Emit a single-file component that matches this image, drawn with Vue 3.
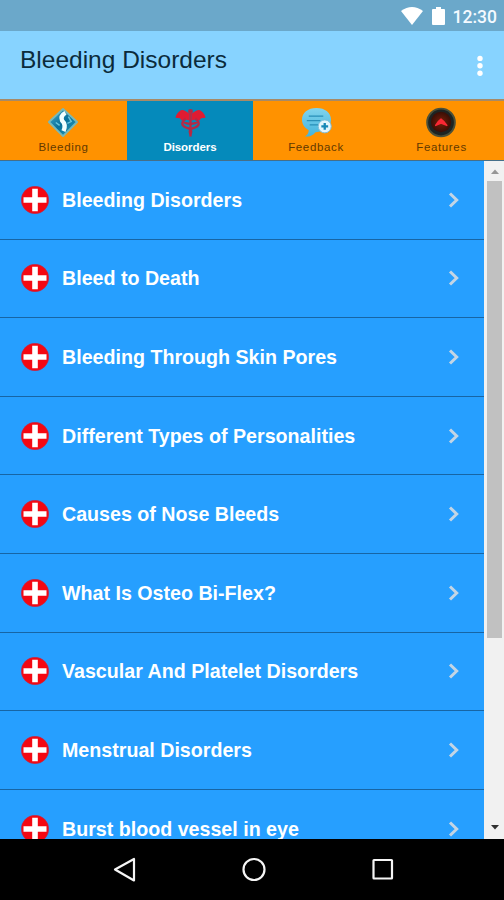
<template>
  <div class="screen">
    <div class="status-bar">
      <svg class="wifi" width="22" height="18" viewBox="0 0 22 18">
        <path d="M0 4Q11 -4 22 4L11 18Z" fill="#fff" />
      </svg>
      <svg class="battery" width="13" height="20" viewBox="0 0 13 20">
        <path d="M4 1h5v2h3q1 0 1 1v14q0 1-1 1H1q-1 0-1-1V4q0-1 1-1h3z" fill="#fff" />
      </svg>
      <span class="clock">12:30</span>
    </div>

    <header class="app-bar">
      <h1 class="title">Bleeding Disorders</h1>
      <svg class="more" width="6" height="22" viewBox="0 0 6 22" fill="#fff">
        <circle cx="3" cy="3.4" r="2.7" />
        <circle cx="3" cy="10.8" r="2.7" />
        <circle cx="3" cy="18.2" r="2.7" />
      </svg>
    </header>

    <nav class="tabs">
      <div
        v-for="tab in tabs"
        :key="tab.name"
        class="tab"
        :class="{ active: tab.name === activeTab }"
        @click="activeTab = tab.name"
      >
        <!-- Blue diamond sign -->
        <svg v-if="tab.icon === 'sign'" class="tab-icon" viewBox="0 0 32 32">
          <defs>
            <linearGradient id="sign" x1="0" y1="0" x2="1" y2="1">
              <stop offset="0" stop-color="#4aaed0" />
              <stop offset=".5" stop-color="#08719b" />
              <stop offset="1" stop-color="#2ba2bd" />
            </linearGradient>
          </defs>
          <path d="M15.500 2L30 15.500L15.500 30L1 15.500Z" fill="url(#sign)" stroke="#78b9b8" stroke-width="2" stroke-linejoin="round" />
          <path d="M18 6Q12.500 9 14.500 14Q19 18 16 25" fill="none" stroke="#f2ffff" stroke-width="4.500" />
          <path d="M8 16l4 3M21 10l3 5-4 2" fill="none" stroke="#69c5dc" stroke-width="1.500" />
        </svg>

        <!-- Caduceus -->
        <svg v-else-if="tab.icon === 'caduceus'" class="tab-icon" viewBox="0 0 32 32">
          <path d="M15 7Q8 1 5 4Q1 7 0.500 11L5 11.500L7 14L11 13L15 14Z" fill="#e01b32" />
          <path d="M17 7Q24 1 27 4Q31 7 31.500 11L27 11.500L25 14L21 13L17 14Z" fill="#e01b32" />
          <circle cx="16" cy="4.500" r="2.500" fill="#b52945" />
          <path d="M16 5V30.500" stroke="#c02640" stroke-width="2.400" />
          <path d="M11 12Q4 18 11 21Q19 23 16 28M21 12Q28 18 21 21Q13 23 16 28M8 15Q16 20 24 15" fill="none" stroke="#b52945" stroke-width="2.300" />
        </svg>

        <!-- Speech bubble with plus badge -->
        <svg v-else-if="tab.icon === 'bubble'" class="tab-icon" viewBox="0 0 32 32">
          <defs>
            <linearGradient id="bubble" x1="0" y1="0" x2="0" y2="1">
              <stop offset="0" stop-color="#82d4ed" />
              <stop offset="1" stop-color="#43b4dc" />
            </linearGradient>
          </defs>
          <path d="M16 1C7 1 1 6 1 13C1 18 4 22 8 24Q8 28 4 30.500Q11 31 15 26C24 26 31 21 31 13C31 6 25 1 16 1Z" fill="url(#bubble)" />
          <path d="M8 9.500H23M6 14H20M9 18.500H19" stroke="#298fb8" stroke-width="1.300" />
          <circle cx="24.500" cy="20" r="6.700" fill="#e4f5fc" stroke="#7dbdd8" />
          <path d="M24.500 16.500V23.500M21 20H28" stroke="#1787b6" stroke-width="2.400" />
        </svg>

        <!-- Dark round button with a red arrow -->
        <svg v-else class="tab-icon" viewBox="0 0 32 32">
          <defs>
            <radialGradient id="lens">
              <stop offset="0" stop-color="#782009" />
              <stop offset="1" stop-color="#3a0e05" />
            </radialGradient>
          </defs>
          <circle cx="15.500" cy="16" r="14.300" fill="#1d2423" stroke="#4b5039" stroke-width="2" />
          <circle cx="15.500" cy="15.500" r="10.500" fill="url(#lens)" />
          <path d="M10 19Q12 15 15.500 12.500Q19 15 21.500 19L15.500 16.500Z" fill="#fa2834" stroke="#fa2834" stroke-width="1.500" stroke-linejoin="round" />
        </svg>
        <span class="tab-label">{{ tab.name }}</span>
      </div>
    </nav>

    <main class="content">
      <ul class="list">
        <li v-for="item in items" :key="item" class="row">
          <svg class="cross" width="28" height="28" viewBox="0 0 28 28">
            <circle cx="14" cy="14" r="13.700" fill="#f40812" stroke="#b92c50" stroke-width=".6" />
            <path d="M14 2.800V25.200M2.500 14H25.500" stroke="#fff" stroke-width="5.600" />
          </svg>
          <span class="row-text">{{ item }}</span>
          <svg class="chevron" width="12" height="16" viewBox="0 0 12 16">
            <path d="M2 1.500L8.700 8L2 14.500" fill="none" stroke="#c3d5e5" stroke-width="3" />
          </svg>
        </li>
      </ul>
      <div class="scrollbar">
        <svg class="arrow" width="8" height="5" viewBox="0 0 8 5"><path d="M0 5L4 .5L8 5Z" fill="#969696" /></svg>
        <div class="thumb"></div>
        <svg class="arrow" width="8" height="5" viewBox="0 0 8 5"><path d="M0 0L4 4.500L8 0Z" fill="#303030" /></svg>
      </div>
    </main>

    <footer class="nav-bar">
      <svg width="24" height="28" viewBox="0 0 24 28">
        <path d="M21 3V24.500L2 13.500Z" />
      </svg>
      <svg width="26" height="28" viewBox="0 0 26 28">
        <circle cx="13" cy="13.500" r="10.500" />
      </svg>
      <svg width="24" height="28" viewBox="0 0 24 28">
        <rect x="2.500" y="4" width="18.500" height="18.500" rx=".5" />
      </svg>
    </footer>
  </div>
</template>

<script setup>
import { ref } from 'vue';

const activeTab = ref('Disorders');

const tabs = [
  { name: 'Bleeding', icon: 'sign' },
  { name: 'Disorders', icon: 'caduceus' },
  { name: 'Feedback', icon: 'bubble' },
  { name: 'Features', icon: 'button' }
];

const items = [
  'Bleeding Disorders',
  'Bleed to Death',
  'Bleeding Through Skin Pores',
  'Different Types of Personalities',
  'Causes of Nose Bleeds',
  'What Is Osteo Bi-Flex?',
  'Vascular And Platelet Disorders',
  'Menstrual Disorders',
  'Burst blood vessel in eye'
];
</script>

<style>
body {
  margin: 0;
}
</style>

<style scoped>
.screen {
  display: flex;
  flex-direction: column;
  width: 504px;
  height: 900px;
  overflow: hidden;
  background: #000;
  font-family: 'Liberation Sans', Arial, sans-serif;
}

.status-bar {
  box-sizing: border-box;
  display: flex;
  flex: none;
  align-items: center;
  justify-content: flex-end;
  height: 31px;
  padding-right: 7px;
  background: #6ba8ca;
}

.battery {
  margin-left: 9px;
}

.clock {
  margin-left: 8px;
  padding-top: 3px;
  color: #f4faff;
  font: 500 17.5px/20px Roboto, sans-serif;
}

.app-bar {
  box-sizing: border-box;
  display: flex;
  flex: none;
  justify-content: space-between;
  height: 68px;
  padding: 15px 21px 0 20px;
  background: #87d3ff;
}

.title {
  margin: 0;
  color: #0b2b3b;
  font-size: 24.5px;
  font-weight: 400;
  line-height: 28px;
}

.more {
  margin-top: 9px;
}

.tabs {
  box-sizing: border-box;
  display: grid;
  flex: none;
  grid-template-columns: 127px 126px 126px 125px;
  height: 62px;
  border-top: 2px solid #a78a67;
  border-bottom: 1px solid #456f8a;
}

.tab {
  display: flex;
  flex-direction: column;
  align-items: center;
  padding-top: 6px;
  background: #ff9200;
  color: #633900;
  cursor: pointer;
}

.tab.active {
  background: #058abb;
  color: #fff;
  font-weight: 700;
}

.tab-icon {
  width: 31px;
  height: 31px;
}

.tab-label {
  margin-top: 3px;
  font-size: 11.5px;
  line-height: 13px;
  letter-spacing: 0.65px;
}

.active .tab-label {
  letter-spacing: -0.05px;
}

.content {
  display: flex;
  flex: none;
  height: 678px;
  overflow: hidden;
}

.list {
  width: 484px;
  margin: 0;
  padding: 0;
  list-style: none;
  background: #269fff;
}

.row {
  box-sizing: border-box;
  display: flex;
  align-items: center;
  height: 78.6px;
  padding: 0 24px 0 21px;
  border-bottom: 1.5px solid #1765a5;
}

.row-text {
  flex: 1;
  margin-left: 13px;
  padding-top: 1px;
  color: #fff;
  font-size: 19.65px;
  font-weight: 700;
}

.scrollbar {
  box-sizing: border-box;
  display: flex;
  flex-direction: column;
  align-items: center;
  width: 20px;
  padding: 8px 0 9px 1px;
  background: #f1f1f1;
}

.arrow:last-child {
  margin-top: auto;
}

.thumb {
  width: 15px;
  height: 457px;
  margin-top: 7px;
  background: #c1c1c1;
}

.nav-bar {
  display: flex;
  flex: 1;
  align-items: center;
  justify-content: center;
  gap: 104px;
  padding-left: 3px;
  background: #000;
}

.nav-bar svg {
  fill: none;
  stroke: #f5f5f5;
  stroke-width: 2.2;
  stroke-linejoin: round;
}
</style>
